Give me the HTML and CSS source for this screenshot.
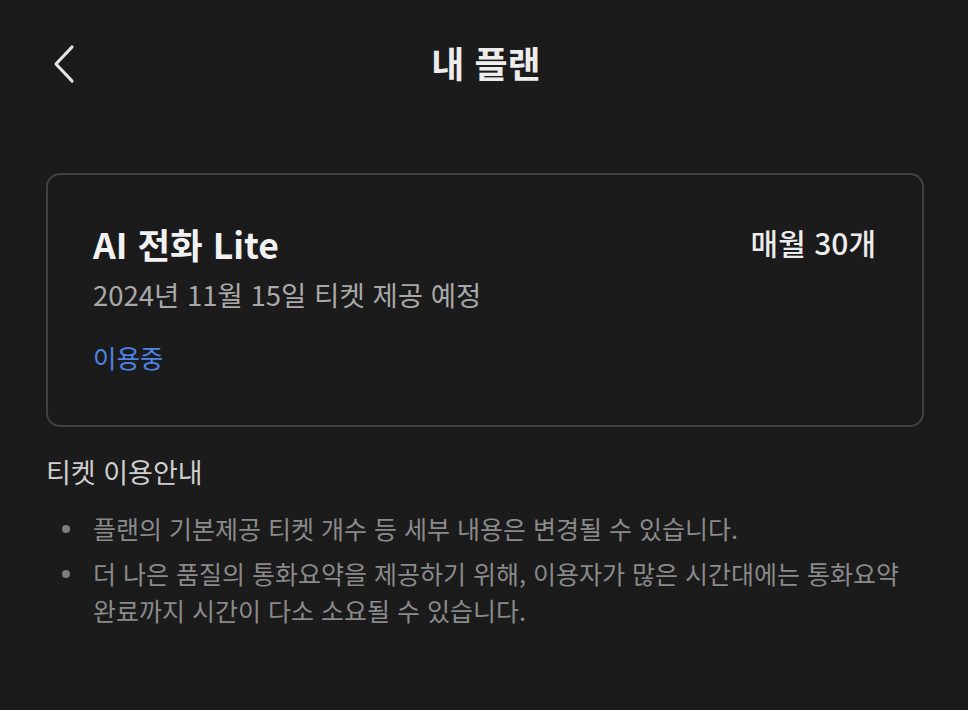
FILE: index.html
```html
<!DOCTYPE html>
<html lang="ko">
<head>
<meta charset="utf-8">
<link rel="stylesheet" href="styles.css">
</head>
<body>
<div class="screen">
  <header class="topbar">
    <button class="back" aria-label="뒤로">
      <svg width="26" height="40" viewBox="0 0 26 40"><path d="M21 3 L5 20 L21 37" fill="none" stroke="#e6e6e6" stroke-width="3.2" stroke-linecap="round" stroke-linejoin="round"/></svg>
    </button>
    <h1 class="title">내 플랜</h1>
  </header>
  <section class="card">
    <div class="card-row">
      <div class="plan-name">AI 전화 Lite</div>
      <div class="plan-amount">매월 30개</div>
    </div>
    <div class="plan-date">2024년 11월 15일 티켓 제공 예정</div>
    <div class="plan-status">이용중</div>
  </section>
  <section class="guide">
    <h2 class="guide-title">티켓 이용안내</h2>
    <ul class="guide-list">
      <li>플랜의 기본제공 티켓 개수 등 세부 내용은 변경될 수 있습니다.</li>
      <li>더 나은 품질의 통화요약을 제공하기 위해, 이용자가 많은 시간대에는 통화요약 완료까지 시간이 다소 소요될 수 있습니다.</li>
    </ul>
  </section>
</div>
</body>
</html>
```
FILE: styles.css
```css
* { box-sizing: border-box; }
html, body { margin: 0; padding: 0; background: #1b1b1b; }
body {
  font-family: "Noto Sans CJK KR", "Noto Sans", sans-serif;
  color: #eaeaea;
  width: 968px;
  height: 710px;
  overflow: hidden;
}
.screen { padding: 0 44px 0 46px; }
.topbar {
  position: relative;
  height: 128px;
  display: flex;
  align-items: flex-start;
  justify-content: center;
  padding-top: 36px;
}
.back {
  position: absolute;
  left: 5px;
  top: 44px;
  background: none;
  border: 0;
  padding: 0;
  display: flex;
}
.title {
  margin: 0;
  font-size: 36px;
  font-weight: 700;
  line-height: 52px;
  color: #ececec;
  padding-left: 2px;
}
.card {
  margin-top: 45px;
  border: 2px solid #424242;
  border-radius: 14px;
  padding: 45px 45px 48px 45px;
  height: 254px;
}
.card-row {
  display: flex;
  justify-content: space-between;
  align-items: flex-start;
}
.plan-name {
  font-size: 35.5px;
  font-weight: 700;
  line-height: 48px;
  color: #f2f2f2;
}
.plan-amount {
  font-size: 30px;
  font-weight: 500;
  line-height: 44px;
  color: #ececec;
  margin-right: 1px;
}
.plan-date {
  margin-top: 6px;
  font-size: 27.5px;
  line-height: 40px;
  color: #a9a9a9;
}
.plan-status {
  margin-top: 25px;
  font-size: 25.5px;
  line-height: 36px;
  color: #4d84e6;
}
.guide { margin-top: 26px; }
.guide-title {
  margin: 0;
  font-size: 27px;
  font-weight: 400;
  line-height: 38px;
  color: #cfcfcf;
}
.guide-list {
  list-style: none;
  margin: 19px 0 0;
  padding: 0 0 0 47px;
  display: flex;
  flex-direction: column;
  gap: 8px;
}
.guide-list li {
  position: relative;
  font-size: 25px;
  line-height: 37px;
  color: #8a8a8a;
}
.guide-list li::before {
  content: "";
  position: absolute;
  left: -31px;
  top: 15px;
  width: 8px;
  height: 8px;
  border-radius: 50%;
  background: #7d7d7d;
}
```
